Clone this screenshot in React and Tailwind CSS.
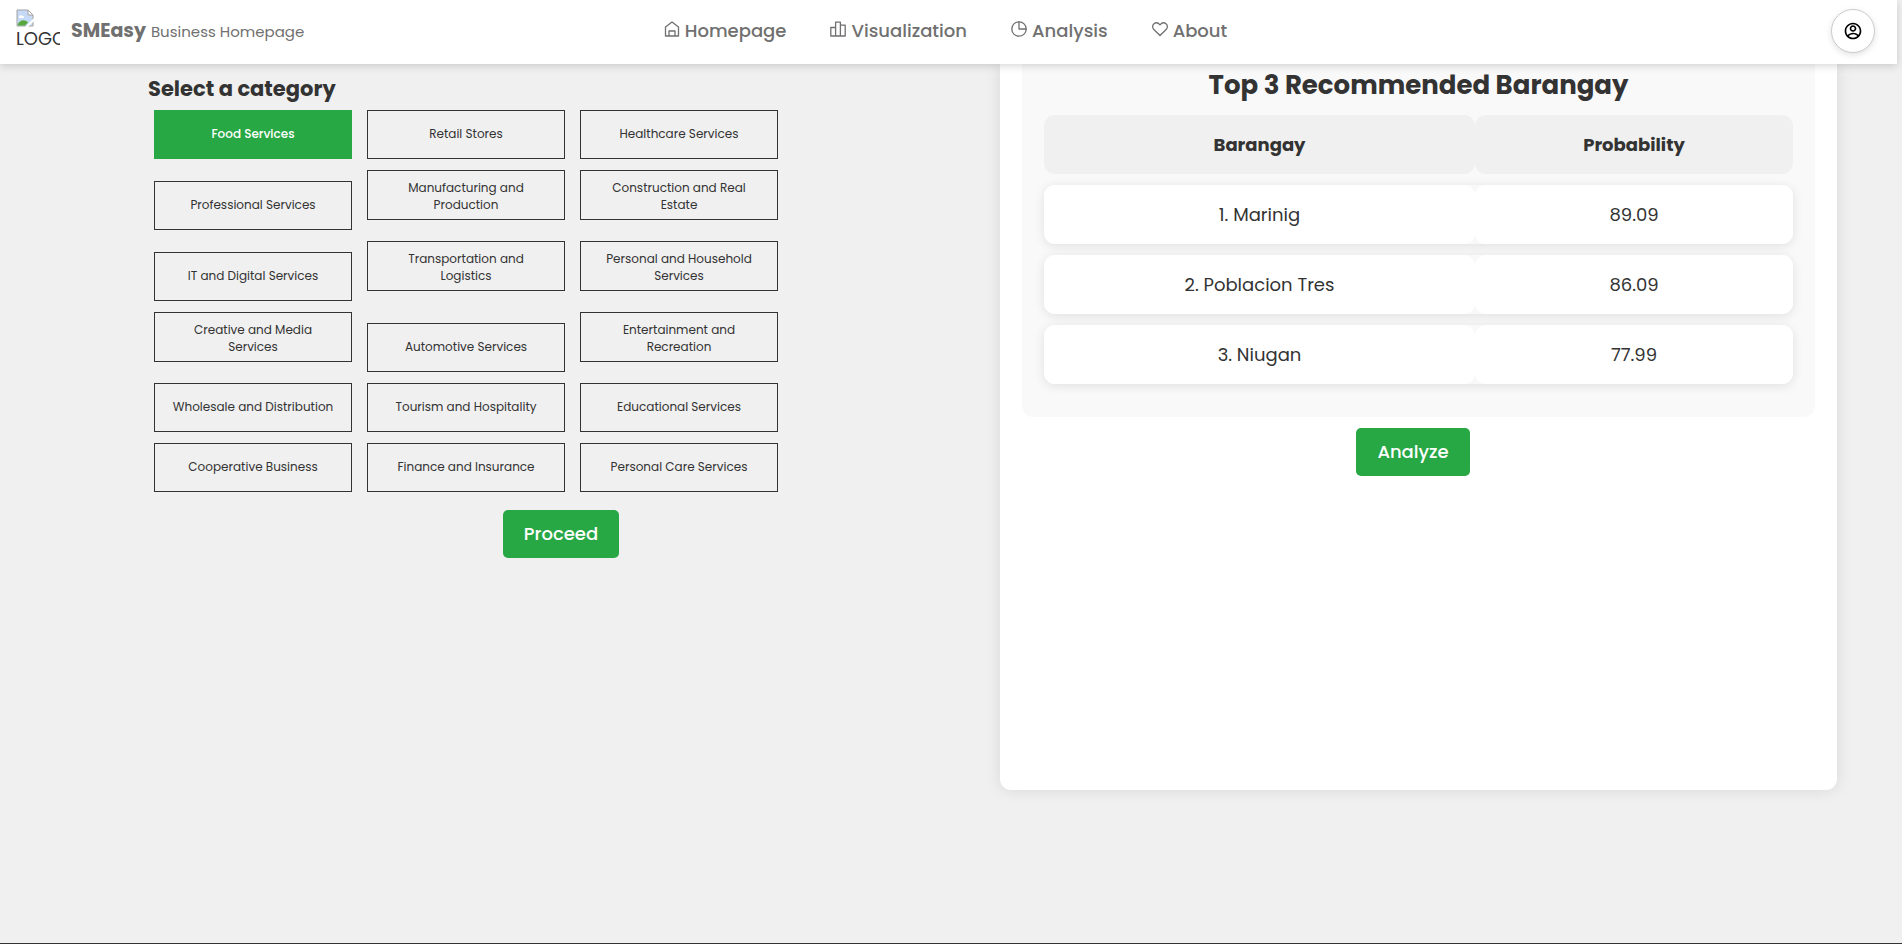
import React, { useState } from "react";
import { RiAccountCircleLine } from "react-icons/ri";

const iconBase = {
  viewBox: "0 0 16 16",
  fill: "none",
  stroke: "currentColor",
  strokeWidth: 1.3,
  strokeLinejoin: "round",
  strokeLinecap: "round",
  "aria-hidden": true,
  className: "mb-[5px] size-4",
};

const HomeIcon = () => (
  <svg {...iconBase}>
    <path d="M1.500 15V6L8 1l6.500 5v9zM5 15V10h6v5" />
  </svg>
);
const ChartIcon = () => (
  <svg {...iconBase}>
    <path d="M.8 15V6.500h4.800V15zM5.600 15V1.200h4.800V15zM10.400 15V4.200h4.800V15z" />
  </svg>
);
const PieIcon = () => (
  <svg {...iconBase}>
    <circle cx="8" cy="8" r="7.200" />
    <path d="M8 .8V8h7.200" />
  </svg>
);
const HeartIcon = () => (
  <svg {...iconBase}>
    <path d="M8 14.500 1.600 8.200C.2 6.500.4 4 2 2.700 3.800 1.300 6.300 1.700 8 3.800c1.700-2.100 4.200-2.500 6-1.100 1.600 1.300 1.800 3.800.4 5.500z" />
  </svg>
);

const links = [
  { label: "Homepage", Icon: HomeIcon },
  { label: "Visualization", Icon: ChartIcon },
  { label: "Analysis", Icon: PieIcon },
  { label: "About", Icon: HeartIcon },
];

const categories = [
  [["Food Services"], ["Retail Stores"], ["Healthcare Services"]],
  [["Professional Services"], ["Manufacturing and", "Production"], ["Construction and Real", "Estate"]],
  [["IT and Digital Services"], ["Transportation and", "Logistics"], ["Personal and Household", "Services"]],
  [["Creative and Media", "Services"], ["Automotive Services"], ["Entertainment and", "Recreation"]],
  [["Wholesale and Distribution"], ["Tourism and Hospitality"], ["Educational Services"]],
  [["Cooperative Business"], ["Finance and Insurance"], ["Personal Care Services"]],
];

const results = [
  ["1. Marinig", "89.09"],
  ["2. Poblacion Tres", "86.09"],
  ["3. Niugan", "77.99"],
];

function Logo() {
  return (
    <div className="h-11 w-11 overflow-hidden text-lg leading-6 text-[#333]">
      <svg viewBox="0 0 18 18" className="size-[18px]" aria-hidden="true">
        <path d="M1 1h11l5 5v11H1z" fill="#c6d9f7" stroke="#a3a3a3" />
        <path d="M3 8c0-2 3-2.500 3.500-1C8.500 6.500 8.500 9 7 9H3z" fill="#fff" />
        <path d="M1.500 16.500c1-5 7-7 10.500-3l-3 3z" fill="#57a83c" />
        <path d="M9 18l9-9v3l-6 6z" fill="#fff" />
        <path d="M12 1v5h5z" fill="#fff" stroke="#a3a3a3" />
      </svg>
      <span className="block">LOGO</span>
    </div>
  );
}

function CategoryButton({ lines, active, onClick }) {
  return (
    <button
      type="button"
      aria-pressed={active}
      onClick={onClick}
      className={`w-[198px] border text-center text-xs leading-[17px] ${
        lines.length > 1 ? "pt-2 pb-1.5" : "pt-3.5 pb-4"
      } ${active ? "border-[#28a745] bg-[#28a745] font-medium text-white" : "border-[#333] text-[#333]"}`}
    >
      {lines.map((line) => (
        <span key={line} className="block">{line}</span>
      ))}
    </button>
  );
}

export default function App() {
  const [selected, setSelected] = useState("Food Services");
  return (
    <div className="flex min-h-screen flex-col border-b border-[#333] bg-[#f0f0f0] font-['Poppins','Inter',sans-serif] text-[#333]">
      <header className="relative z-10 mr-[5px] grid h-16 grid-cols-[1fr_auto_1fr] items-center bg-white pr-[22px] pb-0.5 pl-4 text-[#707070] shadow-[0_2px_8px_rgba(0,0,0,0.16)]">
        <div className="flex items-center gap-[11px]">
          <Logo />
          <a href="#home" className="flex items-baseline gap-[5px]">
            <span className="text-[19px] font-bold">SMEasy</span>
            <span className="text-[15px]">Business Homepage</span>
          </a>
        </div>
        <nav className="flex gap-11">
          {links.map(({ label, Icon }) => (
            <a key={label} href={`#${label.toLowerCase()}`} className="flex items-center gap-[5px] text-lg font-medium">
              <Icon />
              {label}
            </a>
          ))}
        </nav>
        <button type="button" aria-label="Account" className="flex size-11 items-center justify-center justify-self-end rounded-full border border-[#ccc] bg-white text-black shadow-[0_2px_6px_rgba(0,0,0,0.12)]">
          <RiAccountCircleLine className="size-5" />
        </button>
      </header>

      <main className="grid flex-1 grid-cols-[826fr_837fr] items-start gap-[26px] pr-[65px] pl-[148px]">
        <section className="pt-[10px]">
          <h2 className="text-[21px] leading-[30px] font-bold">Select a category</h2>
          <div className="mt-[6px] flex flex-col gap-[11px] pl-[6px]">
            {categories.map((row) => (
              <div key={row[0][0]} className="flex gap-[15px] [align-items:last_baseline]">
                {row.map((lines) => {
                  const name = lines.join(" ");
                  return (
                    <CategoryButton key={name} lines={lines} active={selected === name} onClick={() => setSelected(name)} />
                  );
                })}
              </div>
            ))}
          </div>
          <div className="mt-[18px] flex justify-center">
            <button type="button" className="h-12 rounded-[5px] bg-[#28a745] px-[21px] text-lg font-medium text-white">Proceed</button>
          </div>
        </section>

        <section className="min-h-[726px] rounded-b-[11px] bg-white px-[22px] shadow-[0_0_16px_rgba(0,0,0,0.1)]">
          <div className="rounded-b-[11px] bg-[#f9f9f9] px-[22px] pb-[22px]">
            <h2 className="pt-[2px] text-center text-[26px] leading-[38px] font-bold">Top 3 Recommended Barangay</h2>
            <table className="w-full table-fixed border-separate border-spacing-x-0 border-spacing-y-[11px] text-center text-lg">
              <thead>
                <tr>
                  <th className="h-[59px] w-[431px] rounded-[11px] bg-[#f0f0f0] font-bold">Barangay</th>
                  <th className="h-[59px] rounded-[11px] bg-[#f0f0f0] font-bold">Probability</th>
                </tr>
              </thead>
              <tbody>
                {results.map(([name, score]) => (
                  <tr key={name} className="rounded-[11px] shadow-[0_2px_11px_rgba(0,0,0,0.1)]">
                    <td className="h-[59px] rounded-[11px] bg-white">{name}</td>
                    <td className="h-[59px] rounded-[11px] bg-white">{score}</td>
                  </tr>
                ))}
              </tbody>
            </table>
          </div>
          <div className="mt-[11px] flex justify-center pr-[11px]">
            <button type="button" className="h-12 rounded-[5px] bg-[#28a745] px-[21px] text-lg font-medium text-white">Analyze</button>
          </div>
        </section>
      </main>
    </div>
  );
}
